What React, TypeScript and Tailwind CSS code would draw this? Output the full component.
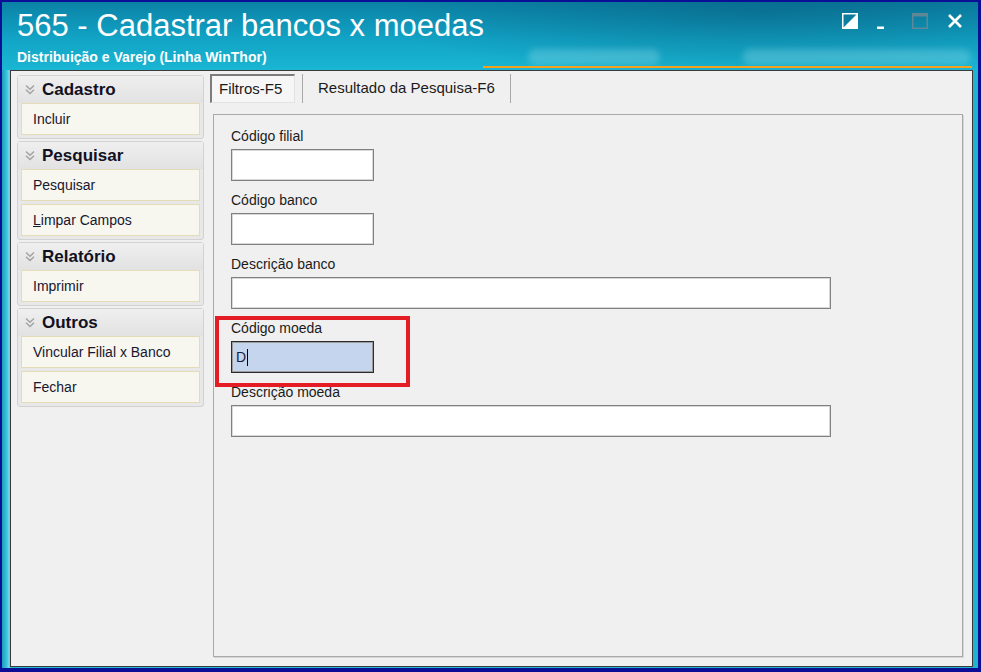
import type { ReactNode } from "react";

const sans = "font-['Liberation_Sans',Arial,sans-serif]";

// double "v" marker used on the side menu headers
function Chevrons() {
  return (
    <svg width="10" height="11" viewBox="0 0 10 11" className="shrink-0">
      <path d="M1 1.5 5 5.2 9 1.5M1 5.8 5 9.5 9 5.8" fill="none" stroke="#a2a2a2" strokeWidth="1.4" />
    </svg>
  );
}

function Group({ title, items }: { title: string; items: ReactNode[] }) {
  return (
    <div className="rounded-[3px] border border-[#d2d2d2] bg-[#e8e8e8] pb-[3px]">
      <div className="flex h-[27px] items-center gap-[7px] pl-[7px] bg-[linear-gradient(#efefef,#e2e2e2)]">
        <Chevrons />
        <span className="text-[17px] font-bold text-[#111122]">{title}</span>
      </div>
      <div className="flex flex-col gap-[3px] px-[3px]">
        {items.map((it, i) => (
          <div
            key={i}
            className="flex h-[32px] items-center border border-[#e3dcb6] bg-[#f7f6ef] pl-[11px] text-[14px] text-[#17172f]"
          >
            {it}
          </div>
        ))}
      </div>
    </div>
  );
}

function Field({ label, wide, focused }: { label: string; wide?: boolean; focused?: boolean }) {
  return (
    <div className="flex flex-col">
      <div className="h-[20px] text-[14px] leading-[20px] text-[#1b1b1b]">{label}</div>
      {focused ? (
        <div className="mt-[3px] flex h-[32px] w-[143px] items-center border border-[#2b2b2b] bg-[#c5d5ee] pl-[4px] text-[14px] text-[#1b1b3b] shadow-[inset_0_0_0_1px_#9c9c9c]">
          D<span className="ml-[1px] h-[17px] w-px bg-black" />
        </div>
      ) : (
        <div
          className={`mt-[3px] h-[32px] border border-[#808080] bg-white shadow-[inset_0_0_0_1px_#d8d8d8] ${wide ? "w-[600px]" : "w-[143px]"}`}
        />
      )}
    </div>
  );
}

function TitleButtons() {
  return (
    <div className="flex items-start gap-[19px] pr-[15px] pt-[11px]">
      <svg width="16" height="16" viewBox="0 0 16 16">
        <rect x="0.75" y="0.75" width="14.5" height="14.5" fill="none" stroke="#fff" strokeWidth="1.5" />
        <path d="M1 15 15 1v14z" fill="#fff" />
      </svg>
      <svg width="16" height="16" viewBox="0 0 16 16">
        <rect x="0" y="13.5" width="7" height="2.5" fill="#fff" />
      </svg>
      <svg width="16" height="16" viewBox="0 0 16 16">
        <rect x="0.75" y="0.75" width="14.5" height="14.5" fill="none" stroke="#5f8795" strokeWidth="1.5" />
        <rect x="1" y="1" width="14" height="2.5" fill="#5f8795" />
      </svg>
      <svg width="16" height="16" viewBox="0 0 16 16">
        <path d="M2 2 14 14M14 2 2 14" stroke="#fff" strokeWidth="2.6" />
      </svg>
    </div>
  );
}

export default function App() {
  return (
    <div className={`h-[672px] w-[981px] bg-[#0b0f96] pb-[4px] pl-[2px] pr-[3px] pt-[2px] ${sans}`}>
      <div className="flex h-full flex-col bg-[linear-gradient(90deg,#1a9fc0,#3cc6dc_5px,#7fd7e6_7px,#23b8d3_9px,#1fb3cf)] pb-[1px]">
        {/* caption */}
        <div className="relative flex h-[68px] justify-between overflow-hidden bg-[radial-gradient(ellipse_380px_70px_at_760px_10px,rgba(0,50,80,0.28),transparent),linear-gradient(180deg,#0b82a6,#12a4c6_55%,#1ab6d3)]">
          <div className="pl-[15px] pt-[6px] text-white">
            <div className="text-[31px] leading-[36px]">565 - Cadastrar bancos x moedas</div>
            <div className="mt-[5px] text-[14px] font-bold leading-[16px]">Distribuição e Varejo (Linha WinThor)</div>
          </div>
          <TitleButtons />
          <div className="absolute bottom-[5px] left-[526px] h-[16px] w-[132px] rounded-full bg-[#9fe2ee]/30 blur-[3px]" />
          <div className="absolute bottom-[5px] left-[741px] h-[16px] w-[228px] rounded-full bg-[#9fe2ee]/30 blur-[3px]" />
          <div className="absolute bottom-[2px] left-[481px] right-[6px] h-[2px] bg-[#f4a11e]" />
        </div>

        {/* client area */}
        <div className="ml-[8px] flex h-[597px] w-[963px] border border-[#3b3b3b] bg-[#f0f0f0] pt-[3px]">
          <div className="ml-[6px] mt-[1px] flex w-[187px] flex-col gap-[2px]">
            <Group title="Cadastro" items={["Incluir"]} />
            <Group
              title="Pesquisar"
              items={[
                "Pesquisar",
                <span key="l">
                  <span className="underline">L</span>impar Campos
                </span>,
              ]}
            />
            <Group title="Relatório" items={["Imprimir"]} />
            <Group title="Outros" items={["Vincular Filial x Banco", "Fechar"]} />
          </div>

          <div className="ml-[6px] mr-[9px] flex flex-1 flex-col pb-[9px]">
            <div className="flex h-[29px] items-stretch text-[15px] text-[#1b1b1b]">
              <div className="flex w-[85px] items-center border-l-2 border-t-2 border-b border-r border-b-[#e2e2e2] border-l-[#7c7c7c] border-r-[#e2e2e2] border-t-[#7c7c7c] bg-[#f6f6f6] pl-[7px]">
                Filtros-F5
              </div>
              <div className="ml-[7px] flex items-center border-l border-r border-[#a8a8a8] px-[15px]">
                Resultado da Pesquisa-F6
              </div>
            </div>

            <div className="ml-[3px] mt-[11px] flex flex-1 flex-col gap-[9px] border border-[#a9a9a9] pl-[17px] pt-[11px] shadow-[1px_1px_0_#d6d6d6]">
              <Field label="Código filial" />
              <Field label="Código banco" />
              <Field label="Descrição banco" wide />
              <div className="relative">
                <Field label="Código moeda" focused />
                <div className="absolute -left-[16px] -top-[2px] h-[71px] w-[195px] border-4 border-[#e41c24]" />
              </div>
              <Field label="Descrição moeda" wide />
            </div>
          </div>
        </div>
      </div>
    </div>
  );
}
